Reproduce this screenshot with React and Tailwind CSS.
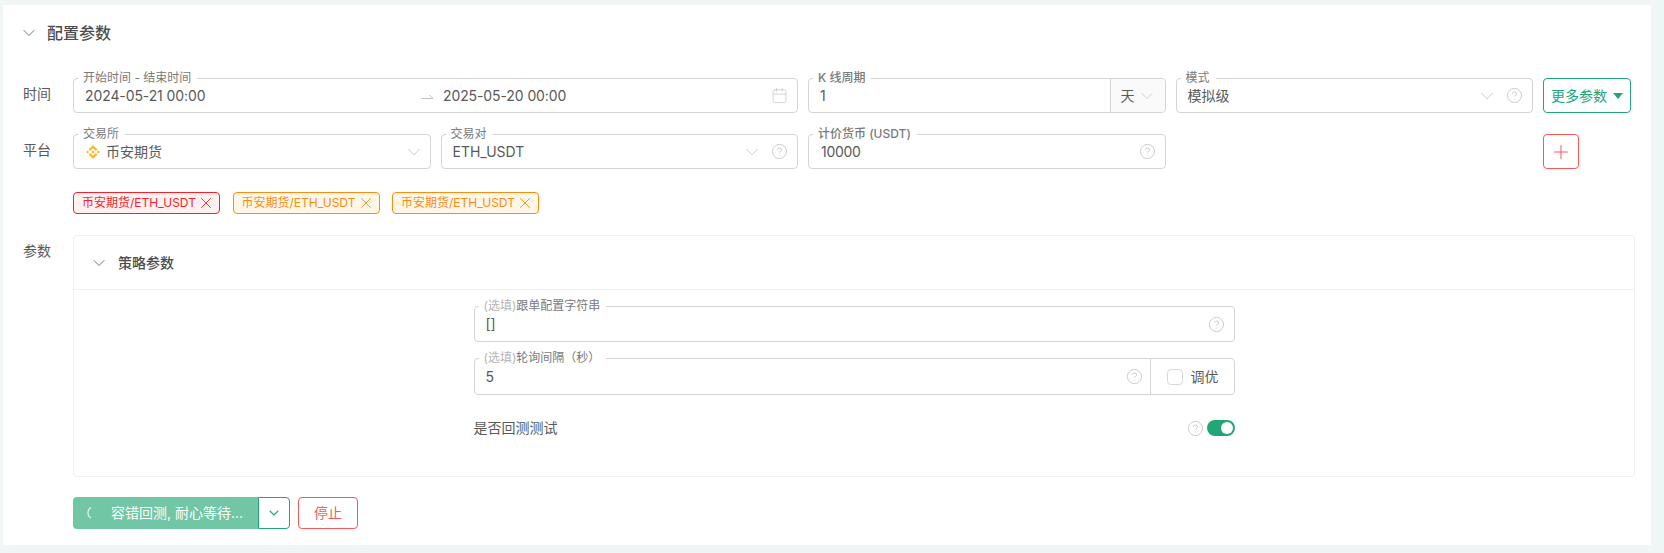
import React from "react";
import { ChevronDown, CircleHelp, Calendar, X, Plus } from "lucide-react";

const font = { fontFamily: 'Inter, "Noto Sans CJK SC", sans-serif' };

function Help({ className = "" }) {
  return <CircleHelp size={17} strokeWidth={1.4} className={"text-[#cacaca] shrink-0 " + className} />;
}
function Chev({ className = "", size = 22 }) {
  return <ChevronDown size={size} strokeWidth={0.8} className={"text-[#b8b8b8] shrink-0 " + className} />;
}
function Label({ children, medium }) {
  return (
    <span className={"absolute left-[4px] -top-[9px] bg-white pl-[5px] pr-[6px] text-xs leading-[16px] text-[#7a7a7a] whitespace-nowrap " + (medium ? "font-medium" : "")}>
      {children}
    </span>
  );
}
function Opt() {
  return <span className="text-[#b5b5b5]">(选填)</span>;
}
function Field({ label, medium, children, className = "" }) {
  return (
    <div className={"relative flex items-center h-full border border-[#d4d4d4] rounded-[4px] text-sm text-[#595959] bg-white " + className}>
      <Label medium={medium}>{label}</Label>
      {children}
    </div>
  );
}
function Binance() {
  return (
    <svg width="14" height="14" viewBox="0 0 32 32" className="shrink-0">
      <path
        fill="#f3ba2f"
        d="M9.6 13.7 16 7.3l6.4 6.4 3.7-3.7L16 0 5.9 10.1l3.7 3.6zM0 16l3.7-3.7L7.4 16l-3.7 3.7L0 16zm9.6 2.3L16 24.7l6.4-6.4 3.7 3.7L16 32 5.9 21.9l3.7-3.6zM24.6 16l3.7-3.7L32 16l-3.7 3.7-3.7-3.7zM19.8 16 16 12.2 13.2 15l-.3.3-.7.7L16 19.8l3.8-3.8z"
      />
    </svg>
  );
}
function Tag({ tone }) {
  const cls =
    tone === "red"
      ? "border-[#f5222d] bg-[#fff1f0] text-[#f5222d]"
      : "border-[#fa8c16] bg-[#fff7e6] text-[#fa8c16]";
  return (
    <div className={"flex items-center h-[22px] w-[147px] pl-[8px] border rounded-[4px] text-xs whitespace-nowrap " + cls}>
      <span className="w-[115px]">币安期货/ETH_USDT</span>
      <X size={18} strokeWidth={1.2} />
    </div>
  );
}

export default function App() {
  return (
    <div style={font} className="bg-[#f0f5f6] h-[553px] pt-[5px] pl-[3px] pr-[13px]">
      <div className="bg-white h-[540px] pt-[16px] pr-[16px]">
        <div className="flex items-center h-6 pl-5 text-[#4d4d4d]">
          <ChevronDown size={20} strokeWidth={1} className="text-[#595959] mr-[8px] -ml-[4px]" />
          <span className="text-base font-medium">配置参数</span>
        </div>

        <div className="flex mt-[33px]">
          <div className="w-[70px] shrink-0 pl-5 text-sm text-[#595959]">
            <div className="h-[31px] flex items-center">时间</div>
            <div className="h-[31px] mt-[25px] flex items-center">平台</div>
          </div>
          <div className="grid grid-cols-4 gap-x-[10px] gap-y-[21px] grid-rows-[35px_35px] w-[1460px]">
            <div className="col-span-2">
              <Field label="开始时间 - 结束时间">
                <span className="w-[336px] ml-[11px] whitespace-nowrap tracking-[-0.1px]">2024-05-21 00:00</span>
                <svg width="12" height="6" viewBox="0 0 12 6" className="shrink-0 mt-[2px]">
                  <path d="M0 4.5H12L8.5 1" fill="none" stroke="#bfbfbf" strokeWidth="1" />
                </svg>
                <span className="flex-1 ml-[10px] whitespace-nowrap tracking-[-0.1px]">2025-05-20 00:00</span>
                <Calendar size={17} strokeWidth={0.9} className="text-[#bfbfbf] mr-[9px]" />
              </Field>
            </div>
            <Field label="K 线周期" medium>
              <span className="flex-1 ml-[11px]">1</span>
              <div className="flex items-center w-[55px] h-full border-l border-[#d4d4d4] bg-[#fafafa] rounded-r-[4px] pl-[10px]">
                <span>天</span>
                <Chev size={20} className="ml-[2px]" />
              </div>
            </Field>
            <Field label="模式">
              <span className="flex-1 ml-[11px]">模拟级</span>
              <Chev className="mr-[8px]" />
              <Help className="mr-[9px]" />
            </Field>
            <Field label="交易所">
              <div className="ml-[12px] mr-[6px]"><Binance /></div>
              <span className="flex-1">币安期货</span>
              <Chev className="mr-[5px]" />
            </Field>
            <Field label="交易对">
              <span className="flex-1 ml-[11px]">ETH_USDT</span>
              <Chev className="mr-[8px]" />
              <Help className="mr-[9px]" />
            </Field>
            <Field label="计价货币 (USDT)" medium>
              <span className="flex-1 ml-[12px] tracking-[-0.3px]">10000</span>
              <Help className="mr-[9px]" />
            </Field>
          </div>
          <div className="ml-[10px] w-[92px]">
            <button className="flex items-center h-[35px] w-[88px] pl-[7px] border border-[#22a675] rounded-[4px] text-sm text-[#22a675] whitespace-nowrap">
              更多参数
              <svg width="10" height="6" viewBox="0 0 10 6" className="ml-[6px]"><path d="M0 0H10L5 6Z" fill="#22a675" /></svg>
            </button>
            <button className="flex items-center justify-center h-[35px] w-[36px] mt-[21px] border border-[#f9575a] rounded-[4px] text-[#f9575a]">
              <Plus size={22} strokeWidth={1.1} />
            </button>
          </div>
        </div>

        <div className="flex gap-[12.5px] ml-[70px] mt-[23px]">
          <Tag tone="red" />
          <Tag tone="orange" />
          <Tag tone="orange" />
        </div>

        <div className="flex mt-[21px]">
          <div className="w-[70px] shrink-0 pl-5 pt-[6px] text-sm text-[#595959]">参数</div>
          <div className="flex-1 h-[242px] border border-[#f0f0f0] rounded-[4px]">
            <div className="flex items-center h-[54px] pl-[15px] border-b border-[#f0f0f0]">
              <ChevronDown size={20} strokeWidth={1} className="text-[#595959] mr-[9px]" />
              <span className="text-sm font-medium text-[#4d4d4d]">策略参数</span>
            </div>
            <div className="w-[761px] mx-auto pt-[16px]">
              <div className="h-[36px]">
                <Field label={<><Opt />跟单配置字符串</>}>
                  <span className="flex-1 ml-[11px]">[]</span>
                  <Help className="mr-[9px]" />
                </Field>
              </div>
              <div className="h-[37px] mt-[16px]">
                <Field label={<><Opt />轮询间隔（秒）</>}>
                  <span className="flex-1 ml-[11px]">5</span>
                  <Help className="mr-[7px]" />
                  <div className="flex items-center w-[84px] h-full border-l border-[#d4d4d4] pl-[16px]">
                    <span className="w-[16px] h-[16px] border border-[#d9d9d9] rounded-[4px] mr-[8px]" />
                    <span>调优</span>
                  </div>
                </Field>
              </div>
              <div className="flex items-center h-[18px] mt-[24px] text-sm text-[#595959]">
                <span className="flex-1">是否回测测试</span>
                <Help className="mr-[3px]" />
                <span className="flex items-center justify-end w-[28px] h-[16px] rounded-full bg-[#22a675] pr-[2px]">
                  <span className="w-[12px] h-[12px] rounded-full bg-white" />
                </span>
              </div>
            </div>
          </div>
        </div>

        <div className="flex ml-[70px] mt-[20px]">
          <button className="flex items-center w-[185px] h-[32px] pl-[12px] bg-[#70c6a5] rounded-l-[4px] text-sm text-white whitespace-nowrap">
            <svg width="14" height="14" viewBox="0 0 14 14" className="mr-[12px]">
              <path d="M6 1.5 A6 6 0 0 0 6 12" fill="none" stroke="#ffffff" strokeOpacity="0.8" strokeWidth="1.2" />
            </svg>
            <span>容错回测, 耐心等待...</span>
          </button>
          <button className="flex items-center justify-center w-[32px] h-[32px] border border-[#22a675] rounded-r-[4px] text-[#22a675]">
            <ChevronDown size={16} strokeWidth={1.6} />
          </button>
          <button className="w-[60px] h-[32px] ml-[8px] border border-[#f9575a] rounded-[4px] text-sm text-[#f9575a]">停止</button>
        </div>
      </div>
    </div>
  );
}
